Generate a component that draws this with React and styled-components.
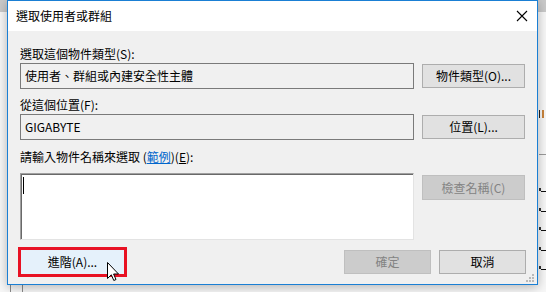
import React from 'react'
import styled, { createGlobalStyle } from 'styled-components'

const GlobalStyle = createGlobalStyle`
  html, body {
    margin: 0;
    padding: 0;
    background: #f5f5f5;
  }
  * { box-sizing: border-box; }
`

const Desktop = styled.div`
  position: relative;
  width: 546px;
  height: 292px;
  overflow: hidden;
  background: linear-gradient(180deg, #c9c9c9 0px, #c9c9c9 12px, #f7f7f7 12px);
  padding-left: 7px;
  font-family: "Noto Sans CJK TC", "Noto Sans CJK SC", sans-serif;
  font-size: 12px;
  color: #000;
`

const BackMark = styled.div`
  position: absolute;
  left: ${p => p.x}px;
  top: ${p => p.y}px;
  width: ${p => p.w}px;
  height: ${p => p.h}px;
  background: ${p => p.c};
`

const Window = styled.div`
  position: relative;
  width: 531px;
  height: 285px;
  border: 1px solid #1a7fd4;
  background: #f0f0f0;
  display: flex;
  flex-direction: column;
  box-shadow: 0 2px 10px rgba(0, 0, 0, 0.28);
`

const TitleBar = styled.div`
  height: 30px;
  background: #fff;
  display: flex;
  align-items: center;
  justify-content: space-between;
  padding: 0 9px 0 8px;
`

const Title = styled.span`
  font-size: 12px;
  line-height: 16px;
  color: #000;
`

const Body = styled.div`
  flex: 1;
  display: flex;
  flex-direction: column;
  padding: 15px 11px 0 12px;
`

const Label = styled.div`
  line-height: 16px;
  height: 16px;
  margin-top: ${p => p.$mt || 0}px;
  margin-bottom: ${p => p.$mb || 1}px;
  white-space: nowrap;
`

const Link = styled.span`
  color: #0066cc;
  text-decoration: underline;
`

const Key = styled.span`
  text-decoration: underline;
`

const Row = styled.div`
  display: grid;
  grid-template-columns: 394px 103px;
  column-gap: 8px;
  align-items: ${p => p.$top ? 'start' : 'center'};
`

const ReadBox = styled.div`
  height: 26px;
  border: 1px solid #7a7a7a;
  background: #f0f0f0;
  padding: 0 4px;
  display: flex;
  align-items: center;
  line-height: 16px;
  white-space: nowrap;
`

const InputArea = styled.div`
  position: relative;
  height: 67px;
  background: #fff;
  border: 1px solid;
  border-color: #a0a0a0 #e3e3e3 #e3e3e3 #a0a0a0;
  box-shadow: inset 1px 1px 0 #696969;
`

const Caret = styled.div`
  position: absolute;
  left: 2px;
  top: 3px;
  width: 1px;
  height: 17px;
  background: #000;
`

const Button = styled.button`
  height: ${p => p.$h || 24}px;
  width: ${p => p.$w ? `${p.$w}px` : '100%'};
  margin-top: ${p => p.$mt || 0}px;
  padding: 0;
  border: 1px solid ${p => p.disabled ? '#bfbfbf' : '#adadad'};
  background: ${p => p.disabled ? '#cccccc' : '#e1e1e1'};
  color: ${p => p.disabled ? '#838383' : '#000'};
  font-family: inherit;
  font-size: 12px;
  line-height: 16px;
  white-space: nowrap;
`

const AdvancedButton = styled(Button)`
  width: 109px;
  height: 30px;
  margin-left: -2px;
  border: 3px solid #e81123;
  background: #e5f1fb;
`

const BottomRow = styled.div`
  position: relative;
  margin-top: 7px;
  display: flex;
  align-items: center;
  justify-content: space-between;
`

const RightGroup = styled.div`
  display: flex;
  gap: 8px;
`

const Pointer = styled.svg`
  position: absolute;
  left: 87px;
  top: 15px;
`

const Grip = styled.svg`
  position: absolute;
  right: 2px;
  bottom: 1px;
`

const CloseIcon = () => (
  <svg width="12" height="12" viewBox="0 0 12 12">
    <path d="M1 1 L11 11 M11 1 L1 11" stroke="#000" strokeWidth="1.1" fill="none" />
  </svg>
)

const App = () => {
  const marks = [188, 208, 227, 247, 266]
  return (
    <>
      <GlobalStyle />
      <Desktop>
        <BackMark x={10} y={285} w={1} h={7} c="#8a8a8a" />
        <BackMark x={22} y={285} w={1} h={7} c="#8a8a8a" />
        <BackMark x={539} y={154} w={7} h={1} c="#9a9a9a" />
        <BackMark x={539} y={110} w={1} h={8} c="#222" />
        <BackMark x={542} y={110} w={2} h={8} c="#c8843c" />
        {marks.map(y => (
          <React.Fragment key={y}>
            <BackMark x={539} y={y} w={2} h={3} c="#333" />
            <BackMark x={541} y={y + 3} w={5} h={1} c="#111" />
          </React.Fragment>
        ))}
        <Window>
          <TitleBar>
            <Title>選取使用者或群組</Title>
            <CloseIcon />
          </TitleBar>
          <Body>
            <Label>選取這個物件類型(S):</Label>
            <Row>
              <ReadBox>使用者、群組或內建安全性主體</ReadBox>
              <Button>物件類型(O)...</Button>
            </Row>

            <Label $mt={8}>從這個位置(F):</Label>
            <Row>
              <ReadBox>GIGABYTE</ReadBox>
              <Button>位置(L)...</Button>
            </Row>

            <Label $mt={9} $mb={8}>
              請輸入物件名稱來選取 (<Link>範例</Link>)(<Key>E</Key>):
            </Label>
            <Row $top>
              <InputArea>
                <Caret />
              </InputArea>
              <Button disabled $h={25} $mt={2}>檢查名稱(C)</Button>
            </Row>

            <BottomRow>
              <AdvancedButton>進階(A)...</AdvancedButton>
              <RightGroup>
                <Button disabled $w={87}>確定</Button>
                <Button $w={87}>取消</Button>
              </RightGroup>
              <Pointer width="13" height="20" viewBox="0 0 13 20">
                <path
                  d="M0.5 0.5 L0.5 16.5 L4.3 12.8 L6.8 18.5 L9 17.5 L6.6 12 L11.5 12 Z"
                  fill="#fff"
                  stroke="#000"
                  strokeWidth="1"
                  strokeLinejoin="miter"
                />
              </Pointer>
            </BottomRow>
          </Body>
          <Grip width="9" height="9" viewBox="0 0 9 9">
            <rect x="6" y="0" width="2" height="2" fill="#b9b9b9" />
            <rect x="3" y="3" width="2" height="2" fill="#b9b9b9" />
            <rect x="6" y="3" width="2" height="2" fill="#b9b9b9" />
            <rect x="0" y="6" width="2" height="2" fill="#b9b9b9" />
            <rect x="3" y="6" width="2" height="2" fill="#b9b9b9" />
            <rect x="6" y="6" width="2" height="2" fill="#b9b9b9" />
          </Grip>
        </Window>
      </Desktop>
    </>
  )
}

export default App
